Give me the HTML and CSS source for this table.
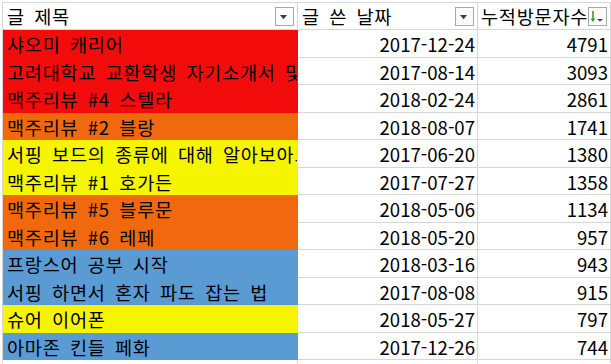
FILE: index.html
```html
<!DOCTYPE html>
<html lang="ko">
<head>
<meta charset="utf-8">
<title>누적방문자수</title>
<link rel="stylesheet" href="styles.css">
</head>
<body>
<div class="sheet">
  <div class="row head">
    <div class="c c1"><span class="t">글 제목</span>
      <svg class="btn" width="19" height="19" viewBox="0 0 19 19"><rect x="0.5" y="0.5" width="18" height="18" fill="#fbfbfb" stroke="#a8a8a8"/><path d="M5 8h7l-3.5 4.3z" fill="#3c3c3c"/></svg>
    </div>
    <div class="c c2"><span class="t">글 쓴 날짜</span>
      <svg class="btn" width="19" height="19" viewBox="0 0 19 19"><rect x="0.5" y="0.5" width="18" height="18" fill="#fbfbfb" stroke="#a8a8a8"/><path d="M5 8h7l-3.5 4.3z" fill="#3c3c3c"/></svg>
    </div>
    <div class="c c3"><span class="t">누적방문자수</span>
      <svg class="btn" width="19" height="19" viewBox="0 0 19 19"><rect x="0.5" y="0.5" width="18" height="18" fill="#fbfbfb" stroke="#a8a8a8"/><path d="M5 4v9" stroke="#3f9a2c" stroke-width="1.6"/><path d="M2.6 11.5h4.8l-2.4 3.5z" fill="#3f9a2c"/><path d="M9 12h6l-3 2.5z" fill="#3c3c3c"/></svg>
    </div>
  </div>
  <div class="row odd red"><div class="c c1">샤오미 캐리어</div><div class="c c2 n">2017-12-24</div><div class="c c3 n">4791</div></div>
  <div class="row even red"><div class="c c1">고려대학교 교환학생 자기소개서 및 학업계획서</div><div class="c c2 n">2017-08-14</div><div class="c c3 n">3093</div></div>
  <div class="row odd red"><div class="c c1">맥주리뷰 #4 스텔라</div><div class="c c2 n">2018-02-24</div><div class="c c3 n">2861</div></div>
  <div class="row even orange"><div class="c c1">맥주리뷰 #2 블랑</div><div class="c c2 n">2018-08-07</div><div class="c c3 n">1741</div></div>
  <div class="row odd yellow"><div class="c c1">서핑 보드의 종류에 대해 알아보아요</div><div class="c c2 n">2017-06-20</div><div class="c c3 n">1380</div></div>
  <div class="row even yellow"><div class="c c1">맥주리뷰 #1 호가든</div><div class="c c2 n">2017-07-27</div><div class="c c3 n">1358</div></div>
  <div class="row odd orange"><div class="c c1">맥주리뷰 #5 블루문</div><div class="c c2 n">2018-05-06</div><div class="c c3 n">1134</div></div>
  <div class="row even orange"><div class="c c1">맥주리뷰 #6 레페</div><div class="c c2 n">2018-05-20</div><div class="c c3 n">957</div></div>
  <div class="row odd blue"><div class="c c1">프랑스어 공부 시작</div><div class="c c2 n">2018-03-16</div><div class="c c3 n">943</div></div>
  <div class="row even blue"><div class="c c1">서핑 하면서 혼자 파도 잡는 법</div><div class="c c2 n">2017-08-08</div><div class="c c3 n">915</div></div>
  <div class="row odd yellow"><div class="c c1">슈어 이어폰</div><div class="c c2 n">2018-05-27</div><div class="c c3 n">797</div></div>
  <div class="row even blue"><div class="c c1">아마존 킨들 페화</div><div class="c c2 n">2017-12-26</div><div class="c c3 n">744</div></div>
  <div class="row tail"><div class="c c1"></div><div class="c c2"></div><div class="c c3"></div></div>
</div>
</body>
</html>
```
FILE: styles.css
```css
html, body {
  margin: 0;
  padding: 0;
  background: #ffffff;
  overflow: hidden;
}
body {
  font-family: "Noto Sans CJK KR", "Noto Sans", sans-serif;
  font-size: 18.6px;
  color: #000000;
}
.sheet {
  margin: 2px 0 0 2px;
  border-top: 1px solid #d6d6d6;
  border-left: 1px solid #d6d6d6;
  width: 608px;
}
.row {
  display: grid;
  grid-template-columns: 295px 180px 133px;
}
.c {
  box-sizing: border-box;
  border-right: 1px solid #d6d6d6;
  border-bottom: 1px solid #d6d6d6;
  white-space: nowrap;
  overflow: hidden;
  padding: 0 2px 0 4px;
  line-height: 26px;
}
.c1, .head .t {
  letter-spacing: 0.75px;
  word-spacing: 3.4px;
}
.head .c { height: 27px; }
.odd .c { height: 28px; }
.even .c { height: 27px; }
.tail .c { height: 3px; border-bottom: none; }
.n { text-align: right; }
.c3 { padding-left: 3px; }

.head .c {
  display: flex;
  align-items: flex-start;
  padding-top: 0;
}
.head .btn {
  margin-left: auto;
  margin-top: 4px;
  margin-right: 1px;
  flex: none;
}
.odd .c, .even .c { padding-top: 1px; }

.red .c1 { background: #f20c0c; border-color: transparent; }
.orange .c1 { background: #f1690f; border-color: transparent; }
.yellow .c1 { background: #f5f500; border-color: transparent; }
.blue .c1 { background: #5b9bd3; border-color: transparent; }
```
